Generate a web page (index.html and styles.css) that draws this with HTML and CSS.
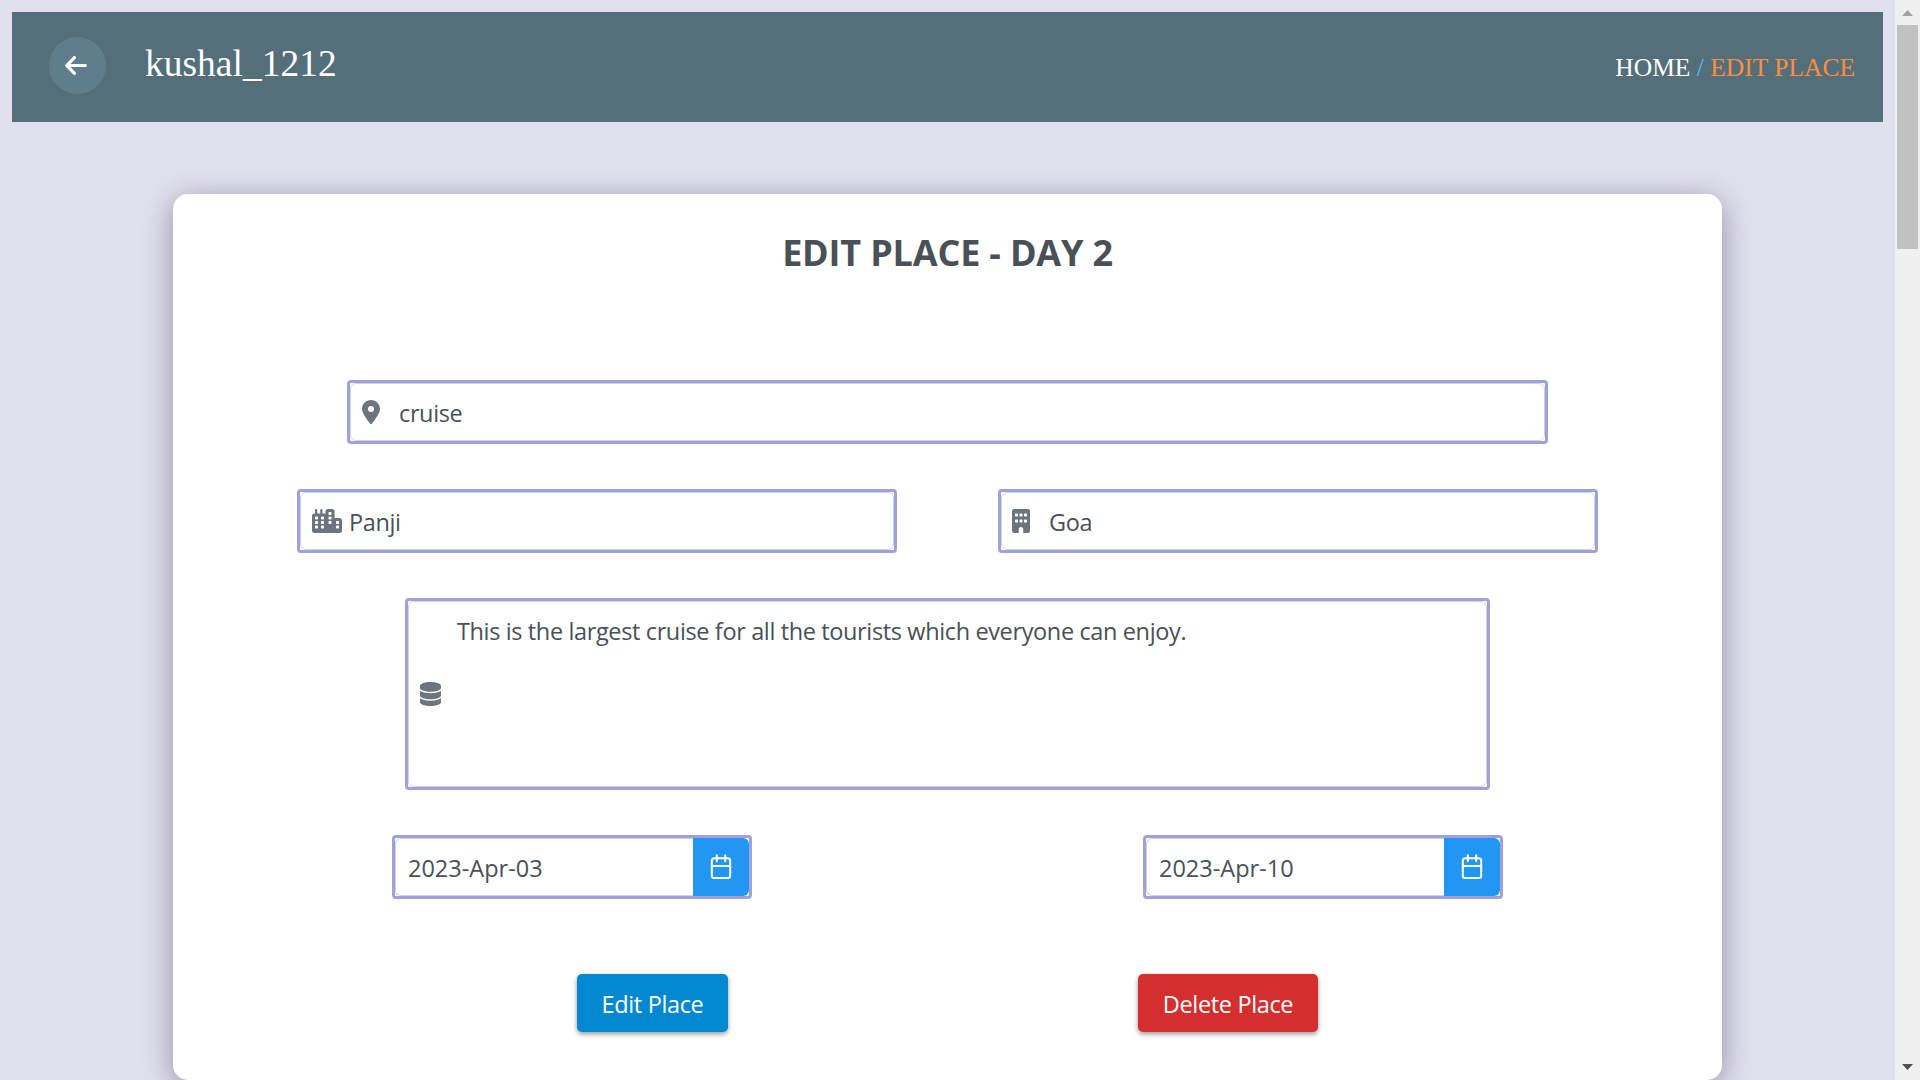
FILE: index.html
```html
<!DOCTYPE html>
<html lang="en">
<head>
<meta charset="utf-8">
<title>Edit Place</title>
<link rel="stylesheet" href="styles.css">
</head>
<body>
<div class="page">
  <header class="header">
    <a class="back">
      <svg width="22" height="25" viewBox="0 0 448 512"><path d="M9.400 233.400c-12.500 12.500-12.500 32.800 0 45.300l160 160c12.500 12.500 32.800 12.500 45.300 0s12.500-32.800 0-45.300L109.200 288 416 288c17.700 0 32-14.300 32-32s-14.300-32-32-32l-306.700 0L214.600 118.600c12.500-12.500 12.500-32.800 0-45.300s-32.800-12.500-45.300 0l-160 160z"/></svg>
    </a>
    <span class="user">kushal_1212</span>
    <nav class="crumbs"><span class="home">HOME</span> / <span class="current">EDIT PLACE</span></nav>
  </header>

  <main class="card">
    <h1 class="title"><span>EDIT PLACE - DAY 2</span></h1>

    <div class="row row-place">
      <div class="field"><div class="inner">
        <svg class="icon" width="18" height="24" viewBox="0 0 384 512"><path d="M215.700 499.200C267 435 384 279.400 384 192C384 86 298 0 192 0S0 86 0 192c0 87.400 117 243 168.300 307.200c12.300 15.300 35.100 15.300 47.400 0zM192 128a64 64 0 1 1 0 128 64 64 0 1 1 0-128z"/></svg>
        <span class="value">cruise</span>
      </div></div>
    </div>

    <div class="row row-region">
      <div class="field"><div class="inner">
        <svg class="icon icon-wide" width="30" height="24" viewBox="0 0 640 512">
          <path d="M480 48c0-26.500-21.500-48-48-48H336c-26.500 0-48 21.500-48 48V96H224V24c0-13.300-10.700-24-24-24s-24 10.700-24 24V96H112V24c0-13.300-10.700-24-24-24S64 10.700 64 24V96H48C21.500 96 0 117.500 0 144V464c0 26.500 21.500 48 48 48H592c26.500 0 48-21.500 48-48V240c0-26.500-21.500-48-48-48H480V48z"/>
          <g class="panes">
            <rect x="64" y="160" width="64" height="64" rx="16"/><rect x="64" y="256" width="64" height="64" rx="16"/><rect x="64" y="352" width="64" height="64" rx="16"/>
            <rect x="192" y="160" width="64" height="64" rx="16"/><rect x="192" y="256" width="64" height="64" rx="16"/><rect x="192" y="352" width="64" height="64" rx="16"/>
            <rect x="352" y="64" width="64" height="64" rx="16"/><rect x="352" y="160" width="64" height="64" rx="16"/><rect x="352" y="256" width="64" height="64" rx="16"/>
            <rect x="512" y="256" width="64" height="64" rx="16"/><rect x="512" y="352" width="64" height="64" rx="16"/>
          </g>
        </svg>
        <span class="value">Panji</span>
      </div></div>
      <div class="field"><div class="inner">
        <svg class="icon icon-building" width="18" height="24" viewBox="0 0 384 512">
          <path d="M48 0C21.500 0 0 21.500 0 48V464c0 26.500 21.500 48 48 48h96V432c0-26.500 21.500-48 48-48s48 21.500 48 48v80h96c26.500 0 48-21.500 48-48V48c0-26.500-21.500-48-48-48H48z"/>
          <g class="panes">
            <rect x="64" y="96" width="64" height="64" rx="16"/><rect x="160" y="96" width="64" height="64" rx="16"/><rect x="256" y="96" width="64" height="64" rx="16"/>
            <rect x="64" y="224" width="64" height="64" rx="16"/><rect x="160" y="224" width="64" height="64" rx="16"/><rect x="256" y="224" width="64" height="64" rx="16"/>
          </g>
        </svg>
        <span class="value">Goa</span>
      </div></div>
    </div>

    <div class="row row-about">
      <div class="field tall"><div class="inner">
        <svg class="icon" width="21" height="24" viewBox="0 0 448 512"><path d="M448 80v48c0 44.200-100.300 80-224 80S0 172.200 0 128V80C0 35.800 100.300 0 224 0S448 35.800 448 80zM393.200 214.700c20.800-7.400 39.900-16.900 54.800-28.600V288c0 44.200-100.300 80-224 80S0 332.200 0 288V186.100c14.900 11.800 34 21.200 54.800 28.600C99.700 230.700 159.500 240 224 240s124.300-9.300 169.200-25.300zM0 346.100c14.900 11.800 34 21.200 54.800 28.600C99.700 390.700 159.500 400 224 400s124.300-9.300 169.200-25.300c20.800-7.400 39.900-16.900 54.800-28.600V432c0 44.200-100.300 80-224 80S0 476.200 0 432V346.100z"/></svg>
        <span class="value">This is the largest cruise for all the tourists which everyone can enjoy.</span>
      </div></div>
    </div>

    <div class="row row-dates">
      <div class="field date">
        <div class="inner"><span class="value day">2023-Apr-03</span></div>
        <div class="picker"><svg width="22" height="26" viewBox="0 0 22 26"><rect x="1.800" y="4.300" width="18.400" height="19.700" rx="2.500"/><path d="M1.800 12H20.200M6.800 1.200V7.200M15.200 1.200V7.200"/></svg></div>
      </div>
      <div class="field date">
        <div class="inner"><span class="value day">2023-Apr-10</span></div>
        <div class="picker"><svg width="22" height="26" viewBox="0 0 22 26"><rect x="1.800" y="4.300" width="18.400" height="19.700" rx="2.500"/><path d="M1.800 12H20.200M6.800 1.200V7.200M15.200 1.200V7.200"/></svg></div>
      </div>
    </div>

    <div class="row row-actions">
      <a class="btn edit"><span>Edit Place</span></a>
      <a class="btn delete"><span>Delete Place</span></a>
    </div>
  </main>
</div>
<aside class="scrollbar">
  <svg width="11" height="6" viewBox="0 0 11 6"><path class="up" d="M0 6L5.500 0L11 6z"/></svg>
  <div class="thumb"></div>
  <svg class="bottom" width="11" height="6" viewBox="0 0 11 6"><path class="down" d="M0 0H11L5.500 6z"/></svg>
</aside>
</body>
</html>
```
FILE: styles.css
```css
* { box-sizing: border-box; }
body {
  margin: 0;
  width: 1920px;
  height: 1080px;
  overflow: hidden;
  display: flex;
  background: #e1e0ef;
  font-family: "Open Sans", "Noto Sans", sans-serif;
}
svg { display: block; flex: none; }
.page { width: 1895px; height: 1080px; padding: 12px 12px 0; overflow: hidden; }
.header {
  height: 110px;
  background: #546e7a;
  display: flex;
  align-items: flex-start;
  padding: 25px 28px 0 37px;
  color: #fff;
  font-family: "Liberation Serif", "Times New Roman", serif;
}
.back {
  width: 57px;
  height: 57px;
  border-radius: 50%;
  background: #607d8b;
  display: flex;
  align-items: center;
  justify-content: center;
  padding-right: 3px;
  fill: #fff;
}
.user { margin: 5px 0 0 39px; font-size: 37.5px; line-height: 44px; }
.crumbs { margin: 17px 0 0 auto; font-size: 25.5px; line-height: 28px; color: #4fc3f7; white-space: nowrap; }
.home { color: #fff; }
.current { color: #ff8f3f; }

.card {
  width: 1549px;
  height: 886px;
  margin: 72px auto 0;
  background: #fff;
  border-radius: 15px;
  box-shadow: 0 6px 30px rgba(32, 22, 48, .4);
  color: #495057;
}
.title {
  margin: 0;
  height: 186px;
  padding-top: 35px;
  text-align: center;
  font-size: 36px;
  line-height: 48px;
  font-weight: 700;
  letter-spacing: -.18px;
}
.row { display: flex; justify-content: space-between; margin: 0 auto 45px; }
.row-place { width: 1201px; }
.row-region { width: 1301px; }
.row-region .field { width: 600px; }
.row-about { width: 1085px; }
.row-dates { width: 1111px; margin-bottom: 75px; }
.row-actions { width: 741px; margin-bottom: 0; }
.field {
  flex: none;
  width: 100%;
  height: 64px;
  border: 3px solid #a0a0dc;
  border-radius: 4px;
  display: flex;
}
.inner {
  flex: 1;
  border: 1px solid #ced4da;
  border-radius: 6px;
  display: flex;
  align-items: center;
  padding-left: 11px;
}
.icon { fill: #6c757d; }
.icon-building { margin-left: -1px; }
.panes { fill: #fff; }
.value {
  font-size: 23.5px;
  line-height: 32px;
  letter-spacing: -.37px;
  white-space: nowrap;
  margin: 1px 0 0 19px;
}
.icon-wide + .value { margin-left: 7px; }
.tall { height: 192px; }
.tall .value { align-self: flex-start; margin: 13px 0 0 16px; }
.field.date { width: 360px; }
.value.day { margin-left: 1px; letter-spacing: 0; }
.date .inner { padding-left: 11px; border-right: 0; border-radius: 6px 0 0 6px; }
.picker {
  width: 56px;
  background: #2196f3;
  border-radius: 0 6px 6px 0;
  display: flex;
  align-items: center;
  justify-content: center;
  fill: none;
  stroke: #fff;
  stroke-width: 2;
  stroke-linecap: round;
}
.btn {
  height: 58px;
  border-radius: 5px;
  color: #fff;
  font-size: 23.5px;
  line-height: 60px;
  letter-spacing: -.35px;
  text-align: center;
  box-shadow: 0 3px 5px rgba(0, 0, 0, .24), 0 1px 4px rgba(0, 0, 0, .2);
}
.edit { width: 151px; background: #0288d1; }
.delete { width: 180px; background: #d32f2f; }

.scrollbar {
  width: 25px;
  height: 1080px;
  background: #f0f0f0;
  display: flex;
  flex-direction: column;
  align-items: center;
  padding: 10px 0;
}
.thumb { width: 21px; height: 224px; margin-top: 9px; background: #c1c1c1; }
.bottom { margin-top: auto; }
.up { fill: #a3a3a3; }
.down { fill: #505050; }
```
